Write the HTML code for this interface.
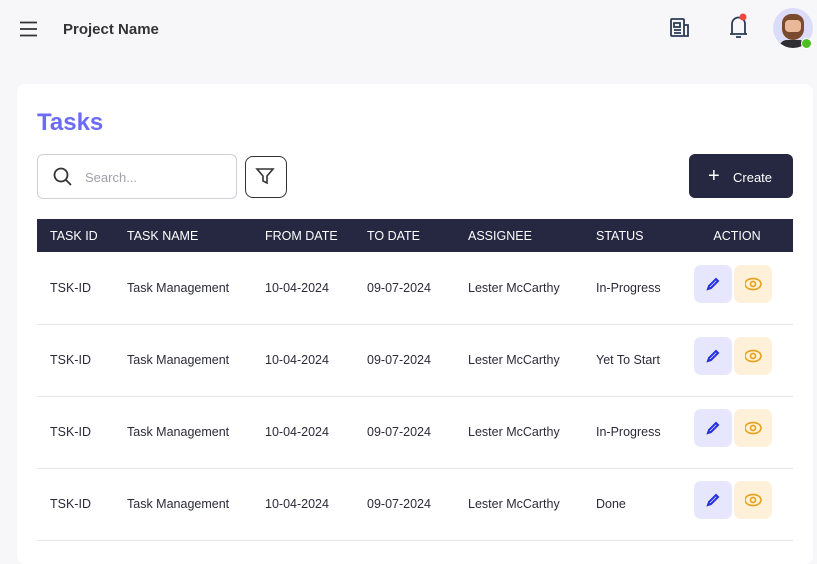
<html><head><style>
body{margin:0;width:817px;height:550px;background:#f7f7fa;font-family:"Liberation Sans",sans-serif;overflow:hidden;position:relative;color:#2b2b3a}
.abs{position:absolute}
.card{left:17px;top:84px;width:796px;height:480px;background:#fff;border-radius:8px}
table{position:absolute;left:37px;top:219px;width:756px;border-collapse:collapse;font-size:12.5px}
th{background:#252840;color:#fff;font-weight:normal;text-align:left;height:33px;padding:0 0 0 13px}
td{height:72px;border-bottom:1px solid #e6e6ea;padding:0 0 0 13px;color:#2b2b3a}
.b{display:inline-block;width:38px;height:38px;border-radius:7px;vertical-align:middle;position:relative;top:-4px}
.b svg{position:absolute;left:11px;top:11px}
</style></head><body>
<svg class="abs" style="left:20px;top:21px" width="18" height="16"><path d="M0 1.5H17M0 8H17M0 14.5H17" stroke="#333" stroke-width="1.8"/></svg>
<div class="abs" style="left:63px;top:21px;font-weight:bold;font-size:15px;color:#333">Project Name</div>
<svg class="abs" style="left:669px;top:17px" width="22" height="22" fill="none" stroke="#2b3a55" stroke-width="1.8"><rect x="2" y="2" width="13" height="17" rx="1"/><path d="M15 8h4v11h-4M5 6h6v4H5zM5 13h7M5 16h7"/></svg>
<svg class="abs" style="left:726px;top:12px" width="26" height="28" fill="none"><path d="M4 22h17M6 22V12a6.5 6.5 0 0113 0v10M10 25h5" stroke="#2b3a55" stroke-width="1.8"/><circle cx="17" cy="5" r="3.5" fill="#f0483e"/></svg>
<div class="abs" style="left:773px;top:8px;width:40px;height:40px;border-radius:50%;background:#dcdcf8;overflow:hidden">
<div class="abs" style="left:9px;top:6px;width:22px;height:26px;border-radius:10px 10px 12px 12px;background:#7a4a2e"></div>
<div class="abs" style="left:12px;top:12px;width:16px;height:12px;border-radius:4px;background:#e9b899"></div>
<div class="abs" style="left:6px;top:32px;width:28px;height:12px;border-radius:8px 8px 0 0;background:#2e2e33"></div></div>
<div class="abs" style="left:801px;top:38px;width:9px;height:9px;border-radius:50%;background:#4cc021;border:1px solid #fff"></div>
<div class="abs card"></div>
<div class="abs" style="left:37px;top:109px;font-size:24px;font-weight:bold;color:#6b6bf5">Tasks</div>
<div class="abs" style="left:37px;top:154px;width:198px;height:43px;border:1px solid #cfcfd6;border-radius:6px;background:#fff"></div>
<svg class="abs" style="left:53px;top:167px" width="20" height="20" fill="none" stroke="#333" stroke-width="1.8"><circle cx="8" cy="8" r="6.5"/><path d="M13 13l5 5"/></svg>
<div class="abs" style="left:85px;top:170px;font-size:13px;color:#a0a0aa">Search...</div>
<div class="abs" style="left:245px;top:156px;width:40px;height:40px;border:1px solid #333;border-radius:8px"></div>
<svg class="abs" style="left:255px;top:166px" width="20" height="20" fill="none" stroke="#333" stroke-width="1.6"><path d="M2 3h16l-6 7v7l-4-2v-5z"/></svg>
<div class="abs" style="left:689px;top:154px;width:104px;height:44px;border-radius:6px;background:#252840;color:#fff;font-size:13px;line-height:44px"><span style="position:absolute;left:19px;font-size:20px;top:0px">+</span><span style="position:absolute;left:44px;top:2px">Create</span></div>
<table>
<tr><th style="width:64px">TASK ID</th><th style="width:125px">TASK NAME</th><th style="width:89px">FROM DATE</th><th style="width:88px">TO DATE</th><th style="width:115px">ASSIGNEE</th><th style="width:85px">STATUS</th><th style="text-align:center;padding:0">ACTION</th></tr>
<tr><td>TSK-ID</td><td>Task Management</td><td>10-04-2024</td><td>09-07-2024</td><td>Lester McCarthy</td><td>In-Progress</td><td class="a"></td></tr>
<tr><td>TSK-ID</td><td>Task Management</td><td>10-04-2024</td><td>09-07-2024</td><td>Lester McCarthy</td><td>Yet To Start</td><td class="a"></td></tr>
<tr><td>TSK-ID</td><td>Task Management</td><td>10-04-2024</td><td>09-07-2024</td><td>Lester McCarthy</td><td>In-Progress</td><td class="a"></td></tr>
<tr><td>TSK-ID</td><td>Task Management</td><td>10-04-2024</td><td>09-07-2024</td><td>Lester McCarthy</td><td>Done</td><td class="a"></td></tr>
</table>
<script>
document.querySelectorAll('td.a').forEach(function(t){t.style.padding='0 0 0 13px';t.innerHTML='<span class="b" style="background:#e6e6fd"><svg width="16" height="16" fill="none" stroke="#2430d8" stroke-width="2"><path d="M3 13l1-3 7-7 2 2-7 7z"/></svg></span> <span class="b" style="background:#fff1d9;margin-left:-1px"><svg width="18" height="16" fill="none" stroke="#e6a322" stroke-width="1.7"><ellipse cx="8" cy="8" rx="8" ry="5.5"/><circle cx="8" cy="8" r="2.5"/></svg></span>';});
</script>
</body></html>
